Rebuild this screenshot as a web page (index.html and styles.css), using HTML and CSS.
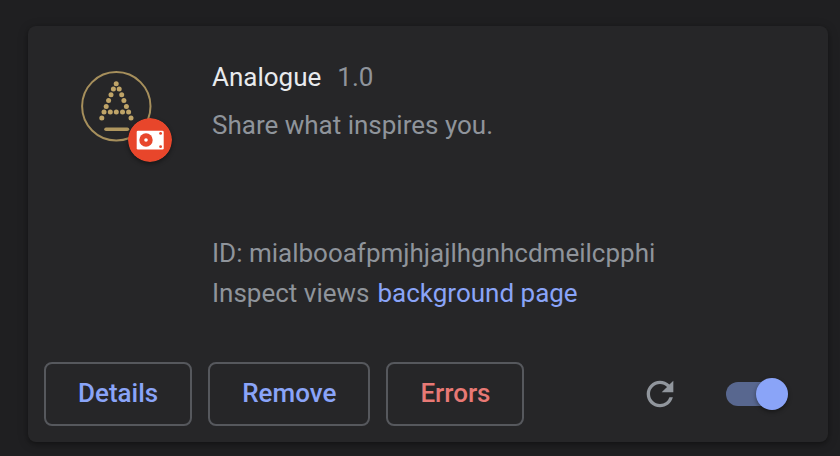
FILE: index.html
```html
<!DOCTYPE html>
<html lang="en">
<head>
<meta charset="utf-8">
<title>Extensions</title>
<link rel="stylesheet" href="styles.css">
</head>
<body>
<article class="card">
  <div class="main">
    <div class="icon">
      <svg class="logo" viewBox="0 0 72 72" aria-hidden="true">
        <circle class="ring" cx="36.3" cy="36.3" r="34.2"/>
        <g class="dots">
          <circle cx="36.2" cy="13.7" r="2.5"/>
          <circle cx="33.4" cy="19" r="2.5"/><circle cx="39.2" cy="19" r="2.5"/>
          <circle cx="31" cy="24.8" r="2.5"/><circle cx="41.7" cy="24.8" r="2.5"/>
          <circle cx="28.6" cy="30.6" r="2.5"/><circle cx="43.9" cy="30.6" r="2.5"/>
          <circle cx="26.2" cy="36.4" r="2.5"/><circle cx="46.4" cy="36.4" r="2.5"/>
          <circle cx="24" cy="42" r="2.5"/><circle cx="30.3" cy="42" r="2.5"/><circle cx="36.3" cy="42" r="2.5"/><circle cx="42.5" cy="42" r="2.5"/><circle cx="48.6" cy="42" r="2.5"/>
          <circle cx="21.8" cy="48.1" r="2.5"/><circle cx="51" cy="48.1" r="2.5"/>
        </g>
        <path class="bar" d="M26 59.2h21.4"/>
      </svg>
      <svg class="badge" viewBox="0 0 44 44" aria-hidden="true">
        <circle class="red" cx="22" cy="22" r="22"/>
        <rect class="white" x="8.7" y="12.7" width="27" height="18.8" rx="1.3"/>
        <circle class="red" cx="18" cy="22" r="6.7"/>
        <circle class="white" cx="18" cy="22" r="1.8"/>
        <circle class="red" cx="32.6" cy="15.4" r="1.4"/>
        <circle class="red" cx="32.6" cy="28.7" r="1.4"/>
      </svg>
    </div>
    <div class="content">
      <div class="heading"><h1 class="name">Analogue</h1><span class="version">1.0</span></div>
      <p class="description">Share what inspires you.</p>
      <p class="line">ID: mialbooafpmjhjajlhgnhcdmeilcpphi</p>
      <p class="line views"><span>Inspect views</span><a class="link" href="#">background page</a></p>
    </div>
  </div>
  <div class="actions">
    <button class="button" type="button">Details</button>
    <button class="button" type="button">Remove</button>
    <button class="button error" type="button">Errors</button>
    <button class="reload" type="button" aria-label="Reload">
      <svg viewBox="0 0 24 24" aria-hidden="true"><path d="M17.65 6.35A7.96 7.96 0 0 0 12 4c-4.42 0-7.99 3.58-7.99 8s3.57 8 7.99 8c3.73 0 6.84-2.55 7.73-6h-2.08A5.99 5.99 0 0 1 12 18c-3.31 0-6-2.69-6-6s2.69-6 6-6c1.66 0 3.14.69 4.22 1.78L13 11h7V4l-2.35 2.35z"/></svg>
    </button>
    <input class="toggle" type="checkbox" aria-label="Enabled" checked>
  </div>
</article>
</body>
</html>
```
FILE: styles.css
```css
* { box-sizing: border-box; }
body {
  margin: 0;
  padding: 26px 12px 14px 28px;
  background: #1f1f21;
  font-family: Roboto, sans-serif;
  font-size: 26px;
  line-height: 40px;
}
.card {
  padding: 16px;
  border-radius: 8px;
  background: #262628;
  box-shadow: 0 2px 4px rgba(0, 0, 0, .3), 0 2px 12px rgba(0, 0, 0, .15);
}
.main {
  display: flex;
  gap: 60px;
  padding: 15px 36px 0;
}
.icon {
  position: relative;
  flex: none;
  width: 72px;
  height: 72px;
  margin-top: 13px;
}
.logo { display: block; width: 100%; }
.ring { fill: none; stroke: #a68f5c; stroke-width: 2; }
.dots { fill: #bfa468; }
.bar { stroke: #b0975f; stroke-width: 3.6; stroke-linecap: round; }
.badge {
  position: absolute;
  right: -20px;
  bottom: -20px;
  width: 44px;
  height: 44px;
  border-radius: 50%;
  box-shadow: 0 2px 4px rgba(0, 0, 0, .4);
}
.red { fill: #e8462b; }
.white { fill: #fff; }
.content { color: #8f949b; }
.heading { display: flex; gap: 16px; }
.name {
  margin: 0;
  color: #e8eaed;
  font-size: 26px;
  font-weight: 400;
}
.description { margin: 8px 0 88px; }
.line { margin: 0; }
.views { display: flex; flex-wrap: wrap; column-gap: 8px; }
.link { color: #8aa4f8; text-decoration: none; }
.actions {
  display: flex;
  align-items: center;
  margin-top: 49px;
  padding-right: 24px;
}
.button {
  height: 64px;
  margin-right: 16px;
  padding: 0 32px 2px;
  border: 2px solid #56585d;
  border-radius: 8px;
  background: none;
  color: #8aa4f8;
  font: 500 26px/40px Roboto, sans-serif;
}
.error { color: #e87975; }
.reload {
  width: 40px;
  height: 40px;
  margin-left: auto;
  padding: 0;
  border: 0;
  background: none;
}
.reload svg { display: block; fill: #91969d; }
.toggle {
  appearance: none;
  position: relative;
  width: 62px;
  height: 32px;
  margin: 0 0 0 46px;
}
.toggle::before {
  content: "";
  position: absolute;
  inset: 4px 6px 4px 0;
  border-radius: 12px;
  background: #58678f;
}
.toggle::after {
  content: "";
  position: absolute;
  top: 0;
  right: 0;
  width: 32px;
  height: 32px;
  border-radius: 50%;
  background: #8aa4f8;
  box-shadow: 0 2px 4px rgba(0, 0, 0, .4);
}
```
